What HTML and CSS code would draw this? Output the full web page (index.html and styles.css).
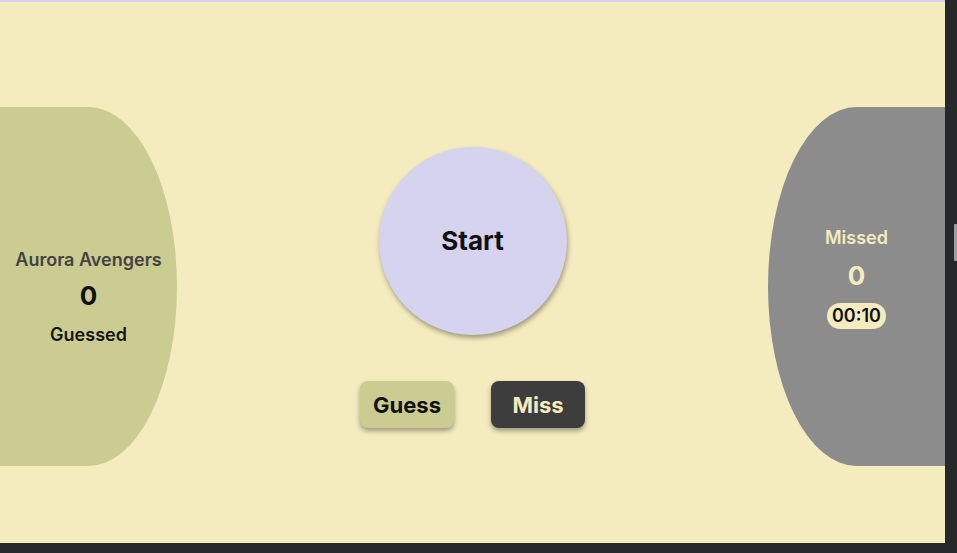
FILE: index.html
```html
<!DOCTYPE html>
<html lang="en">
<head>
<meta charset="utf-8">
<title>Game</title>
<link rel="stylesheet" href="styles.css">
</head>
<body>
<div class="frame">
  <main class="app">
    <section class="panel panel-left">
      <div class="team">Aurora Avengers</div>
      <div class="score">0</div>
      <div class="label">Guessed</div>
    </section>
    <section class="center">
      <button class="start">Start</button>
      <div class="actions">
        <button class="btn btn-guess">Guess</button>
        <button class="btn btn-miss">Miss</button>
      </div>
    </section>
    <section class="panel panel-right">
      <div class="label label-miss">Missed</div>
      <div class="score score-miss">0</div>
      <div class="timer">00:10</div>
    </section>
  </main>
  <div class="thumb"></div>
</div>
</body>
</html>
```
FILE: styles.css
```css
html, body {
  margin: 0;
  padding: 0;
}
body {
  background: #27282a;
  width: 957px;
  height: 553px;
  overflow: hidden;
  font-family: Inter, "Noto Sans", sans-serif;
}
.frame {
  position: relative;
  width: 957px;
  height: 553px;
}
.app {
  width: 945px;
  height: 543px;
  box-sizing: border-box;
  background: #f4ecbf;
  border-top: 2px solid #d6d3ee;
  display: flex;
  align-items: flex-start;
  overflow: hidden;
}
.panel {
  width: 177px;
  height: 359px;
  margin-top: 105px;
  flex: none;
  display: flex;
  flex-direction: column;
  align-items: center;
  box-sizing: border-box;
}
.panel-left {
  background: #cbcc92;
  border-radius: 0 50% 50% 0;
  padding-top: 142px;
}
.panel-right {
  background: #8c8c8c;
  border-radius: 50% 0 0 50%;
  padding-top: 120px;
}
.team {
  font-size: 18px;
  font-weight: 600;
  color: #434343;
  line-height: 22px;
}
.score {
  font-size: 26px;
  font-weight: 700;
  color: #111;
  line-height: 31px;
  margin-top: 9px;
}
.label {
  font-size: 18px;
  font-weight: 600;
  color: #151515;
  line-height: 22px;
  margin-top: 13px;
}
.label-miss {
  color: #f4ecbf;
  margin-top: 0;
}
.score-miss {
  color: #f4ecbf;
  margin-top: 11px;
}
.timer {
  margin-top: 12px;
  background: #f4ecbf;
  color: #111;
  font-size: 18px;
  font-weight: 600;
  line-height: 22px;
  padding: 2px 5px;
  border-radius: 13px;
}
.center {
  flex: 1;
  display: flex;
  flex-direction: column;
  align-items: center;
  padding-top: 145px;
}
.start {
  width: 188px;
  height: 188px;
  border-radius: 50%;
  border: none;
  background: #d6d3ee;
  font-family: inherit;
  font-size: 26px;
  font-weight: 700;
  color: #111;
  box-shadow: 1px 3px 5px rgba(0, 0, 0, 0.35);
  padding: 0 0 2px;
}
.actions {
  display: flex;
  gap: 37px;
  margin-top: 46px;
}
.btn {
  width: 94px;
  height: 47px;
  border: none;
  border-radius: 8px;
  font-family: inherit;
  font-size: 22px;
  font-weight: 700;
  padding: 0;
  box-shadow: 0 3px 5px rgba(0, 0, 0, 0.35);
}
.btn-guess {
  background: #cbcc92;
  color: #111;
}
.btn-miss {
  background: #3d3d3d;
  color: #f4ecbf;
}
.thumb {
  position: absolute;
  left: 954px;
  top: 224px;
  width: 3px;
  height: 37px;
  background: #9d9d9d;
  border-radius: 1px 0 0 1px;
}
```
